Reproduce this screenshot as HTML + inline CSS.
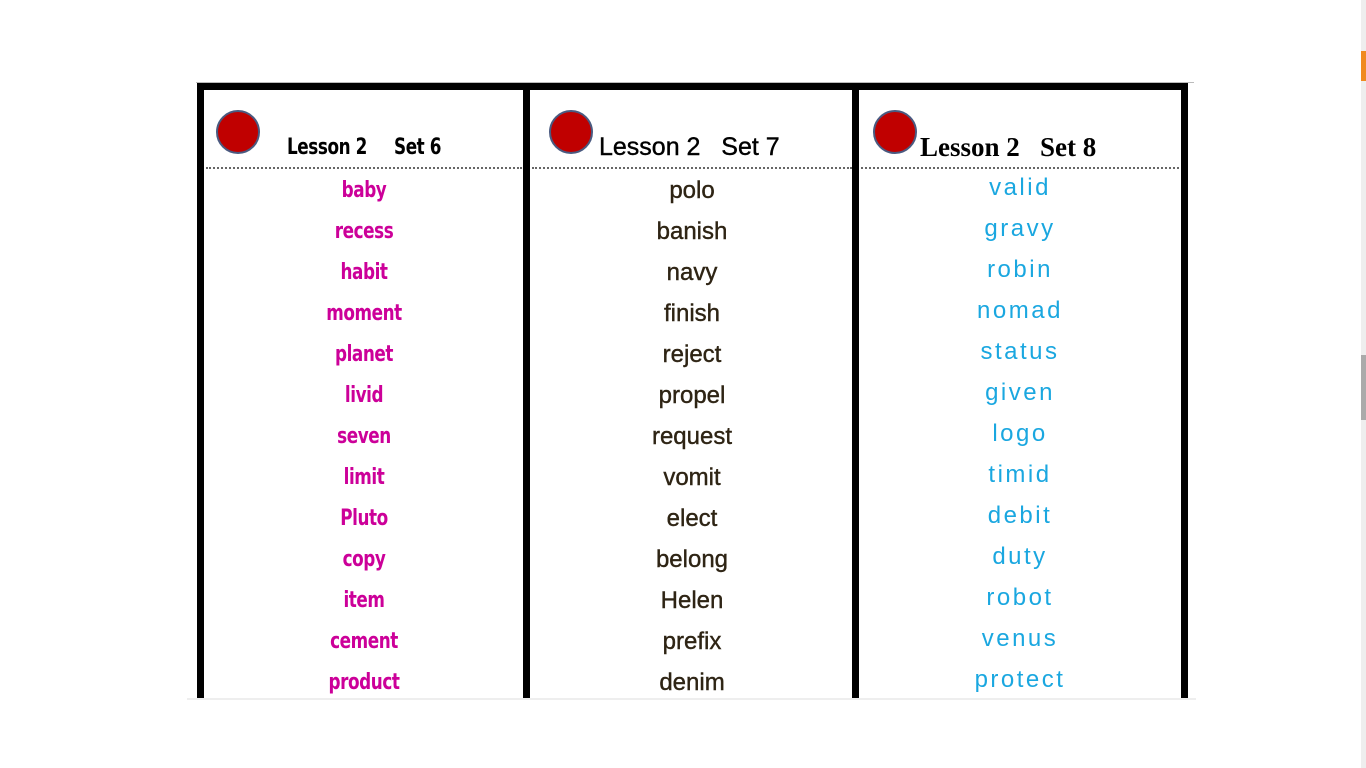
<!DOCTYPE html>
<html><head><style>
body{margin:0;width:1366px;height:768px;background:#fff;position:relative;overflow:hidden;font-family:"Liberation Sans",sans-serif}
.a{position:absolute}
.v{position:absolute;top:83px;width:7px;height:616px;background:#000}
.dot{position:absolute;top:167px;height:0;border-top:2px dotted #666}
.c{position:absolute;border-radius:50%;background:#c00000;border:2px solid #4a5a80;box-sizing:border-box}
.col{position:absolute;top:170px;width:320px;text-align:center}
.col div{height:41px;line-height:41px}
.p{color:#cc0099;font-weight:bold;font-size:22px;font-family:"DejaVu Sans Condensed",sans-serif;letter-spacing:-0.5px}
.p div{transform:scaleX(0.85)}
.b{color:#2e2414;font-size:24px;-webkit-text-stroke:0.4px #2e2414}
.y{color:#1aa7e0;font-size:24px;letter-spacing:2.5px}
</style></head><body>
<div class="a" style="left:196px;top:82px;width:998px;height:1px;background:#bbb"></div>
<div class="a" style="left:197px;top:83px;width:991px;height:7px;background:#000"></div>
<div class="v" style="left:197px"></div>
<div class="v" style="left:523px"></div>
<div class="v" style="left:852px"></div>
<div class="v" style="left:1181px"></div>
<div class="a" style="left:187px;top:698px;width:1009px;height:2px;background:#eee"></div>
<div class="dot" style="left:206px;width:316px"></div>
<div class="dot" style="left:532px;width:320px"></div>
<div class="dot" style="left:861px;width:318px"></div>
<div class="c" style="left:216px;top:110px;width:44px;height:44px"></div>
<div class="c" style="left:549px;top:110px;width:44px;height:44px"></div>
<div class="c" style="left:873px;top:110px;width:44px;height:44px"></div>
<div class="a" style="left:287px;top:135px;font-size:22px;font-weight:bold;font-family:'DejaVu Sans Condensed',sans-serif;letter-spacing:-0.5px;transform:scaleX(0.85);transform-origin:left">Lesson 2&nbsp;&nbsp;&nbsp;&nbsp; Set 6</div>
<div class="a" style="left:599px;top:133px;font-size:25px;-webkit-text-stroke:0.4px #000">Lesson 2&nbsp;&nbsp; Set 7</div>
<div class="a" style="left:920px;top:132px;font-size:27px;font-weight:bold;font-family:'Liberation Serif',serif">Lesson 2&nbsp;&nbsp; Set 8</div>
<div class="col p" style="left:204px"><div>baby</div><div>recess</div><div>habit</div><div>moment</div><div>planet</div><div>livid</div><div>seven</div><div>limit</div><div>Pluto</div><div>copy</div><div>item</div><div>cement</div><div>product</div></div>
<div class="col b" style="left:532px"><div>polo</div><div>banish</div><div>navy</div><div>finish</div><div>reject</div><div>propel</div><div>request</div><div>vomit</div><div>elect</div><div>belong</div><div>Helen</div><div>prefix</div><div>denim</div></div>
<div class="col y" style="left:860px;top:167px"><div>valid</div><div>gravy</div><div>robin</div><div>nomad</div><div>status</div><div>given</div><div>logo</div><div>timid</div><div>debit</div><div>duty</div><div>robot</div><div>venus</div><div>protect</div></div>
<div class="a" style="left:1361px;top:0;width:5px;height:768px;background:#eee"></div>
<div class="a" style="left:1361px;top:51px;width:5px;height:30px;background:#f08a20"></div>
<div class="a" style="left:1361px;top:355px;width:5px;height:65px;background:#aaa"></div>
</body></html>
